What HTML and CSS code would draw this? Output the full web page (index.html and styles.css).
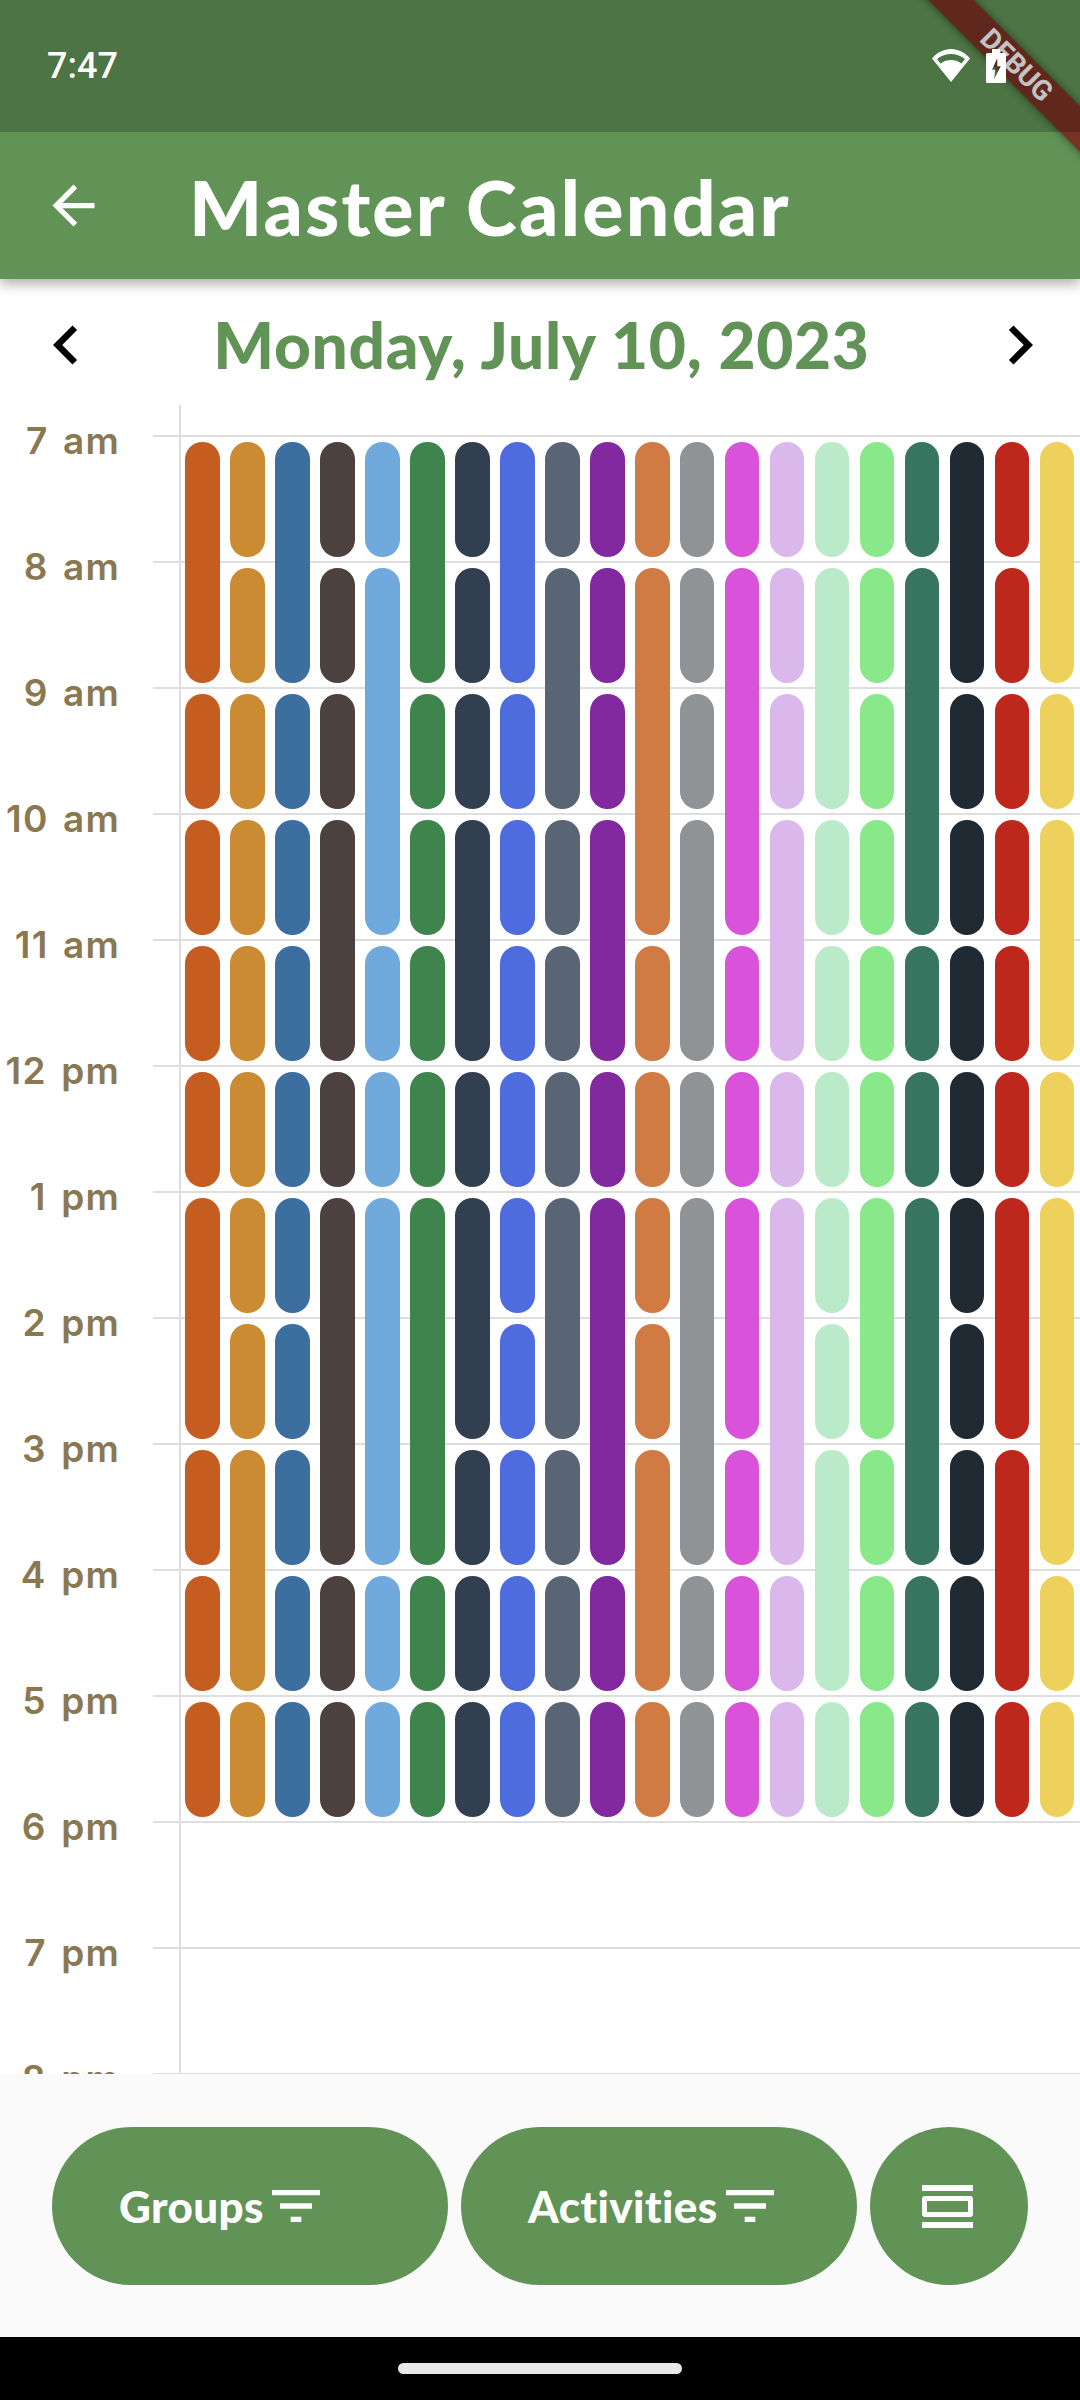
FILE: index.html
```html
<!DOCTYPE html>
<html lang="en">
<head>
<meta charset="utf-8">
<title>Master Calendar</title>
<link rel="stylesheet" href="styles.css">
</head>
<body>
<div class="screen">
  <header class="appbar">
    <svg class="back" viewBox="0 0 24 24"><path d="M20 11H7.83l5.59-5.59L12 4l-8 8 8 8 1.41-1.41L7.83 13H20v-2z"/></svg>
    <h1 class="title">Master Calendar</h1>
  </header>
  <div class="debug-clip"><div class="debug-band">DEBUG</div></div>
  <div class="statusbar">
    <span class="clock">7:47</span>
    <div class="status-icons">
      <svg class="wifi" viewBox="0 0 38 33"><path fill-rule="evenodd" d="M19 33L0 9.5C5 3.5 12 0 19 0s14 3.5 19 9.5zM5 10c4.500-3.500 9-5 14-5s9.500 1.500 14 5l-3.500 4.500C26 12 23 11 19 11s-7 1-10.500 3.500z"/></svg>
      <svg class="battery" viewBox="0 0 20 34"><path fill-rule="evenodd" d="M6 0h8v4h4.500A1.500 1.500 0 0 1 20 5.500v27a1.500 1.500 0 0 1-1.500 1.500h-17A1.500 1.500 0 0 1 0 32.500v-27A1.500 1.500 0 0 1 1.500 4H6zM11.300 9L6 20.700h3L8.300 30l6.400-12.700h-3.400z"/></svg>
    </div>
  </div>
  <div class="datebar">
    <svg class="chev" viewBox="0 0 24 24"><path d="M15.410 7.410L14 6l-6 6 6 6 1.410-1.410L10.830 12z"/></svg>
    <h2 class="date">Monday, July 10, 2023</h2>
    <svg class="chev" viewBox="0 0 24 24"><path d="M10 6L8.590 7.410 13.170 12l-4.580 4.590L10 18l6-6z"/></svg>
  </div>
  <main class="calendar">
    <div class="hour"><span class="label">7 am</span><span class="rule"></span></div>
    <div class="hour"><span class="label">8 am</span><span class="rule"></span></div>
    <div class="hour"><span class="label">9 am</span><span class="rule"></span></div>
    <div class="hour"><span class="label">10 am</span><span class="rule"></span></div>
    <div class="hour"><span class="label">11 am</span><span class="rule"></span></div>
    <div class="hour"><span class="label">12 pm</span><span class="rule"></span></div>
    <div class="hour"><span class="label">1 pm</span><span class="rule"></span></div>
    <div class="hour"><span class="label">2 pm</span><span class="rule"></span></div>
    <div class="hour"><span class="label">3 pm</span><span class="rule"></span></div>
    <div class="hour"><span class="label">4 pm</span><span class="rule"></span></div>
    <div class="hour"><span class="label">5 pm</span><span class="rule"></span></div>
    <div class="hour"><span class="label">6 pm</span><span class="rule"></span></div>
    <div class="hour"><span class="label">7 pm</span><span class="rule"></span></div>
    <div class="hour"><span class="label">8 pm</span><span class="rule"></span></div>
    <div class="events">
      <div class="col c1"><div class="p2"></div><div class="p1"></div><div class="p1"></div><div class="p1"></div><div class="p1"></div><div class="p2"></div><div class="p1"></div><div class="p1"></div><div class="p1"></div></div>
      <div class="col c2"><div class="p1"></div><div class="p1"></div><div class="p1"></div><div class="p1"></div><div class="p1"></div><div class="p1"></div><div class="p1"></div><div class="p1"></div><div class="p2"></div><div class="p1"></div></div>
      <div class="col c3"><div class="p2"></div><div class="p1"></div><div class="p1"></div><div class="p1"></div><div class="p1"></div><div class="p1"></div><div class="p1"></div><div class="p1"></div><div class="p1"></div><div class="p1"></div></div>
      <div class="col c4"><div class="p1"></div><div class="p1"></div><div class="p1"></div><div class="p2"></div><div class="p1"></div><div class="p3"></div><div class="p1"></div><div class="p1"></div></div>
      <div class="col c5"><div class="p1"></div><div class="p3"></div><div class="p1"></div><div class="p1"></div><div class="p3"></div><div class="p1"></div><div class="p1"></div></div>
      <div class="col c6"><div class="p2"></div><div class="p1"></div><div class="p1"></div><div class="p1"></div><div class="p1"></div><div class="p3"></div><div class="p1"></div><div class="p1"></div></div>
      <div class="col c7"><div class="p1"></div><div class="p1"></div><div class="p1"></div><div class="p2"></div><div class="p1"></div><div class="p2"></div><div class="p1"></div><div class="p1"></div><div class="p1"></div></div>
      <div class="col c8"><div class="p2"></div><div class="p1"></div><div class="p1"></div><div class="p1"></div><div class="p1"></div><div class="p1"></div><div class="p1"></div><div class="p1"></div><div class="p1"></div><div class="p1"></div></div>
      <div class="col c9"><div class="p1"></div><div class="p2"></div><div class="p1"></div><div class="p1"></div><div class="p1"></div><div class="p2"></div><div class="p1"></div><div class="p1"></div><div class="p1"></div></div>
      <div class="col c10"><div class="p1"></div><div class="p1"></div><div class="p1"></div><div class="p2"></div><div class="p1"></div><div class="p3"></div><div class="p1"></div><div class="p1"></div></div>
      <div class="col c11"><div class="p1"></div><div class="p3"></div><div class="p1"></div><div class="p1"></div><div class="p1"></div><div class="p1"></div><div class="p2"></div><div class="p1"></div></div>
      <div class="col c12"><div class="p1"></div><div class="p1"></div><div class="p1"></div><div class="p2"></div><div class="p1"></div><div class="p3"></div><div class="p1"></div><div class="p1"></div></div>
      <div class="col c13"><div class="p1"></div><div class="p3"></div><div class="p1"></div><div class="p1"></div><div class="p2"></div><div class="p1"></div><div class="p1"></div><div class="p1"></div></div>
      <div class="col c14"><div class="p1"></div><div class="p1"></div><div class="p1"></div><div class="p2"></div><div class="p1"></div><div class="p3"></div><div class="p1"></div><div class="p1"></div></div>
      <div class="col c15"><div class="p1"></div><div class="p2"></div><div class="p1"></div><div class="p1"></div><div class="p1"></div><div class="p1"></div><div class="p1"></div><div class="p2"></div><div class="p1"></div></div>
      <div class="col c16"><div class="p1"></div><div class="p1"></div><div class="p1"></div><div class="p1"></div><div class="p1"></div><div class="p1"></div><div class="p2"></div><div class="p1"></div><div class="p1"></div><div class="p1"></div></div>
      <div class="col c17"><div class="p1"></div><div class="p3"></div><div class="p1"></div><div class="p1"></div><div class="p3"></div><div class="p1"></div><div class="p1"></div></div>
      <div class="col c18"><div class="p2"></div><div class="p1"></div><div class="p1"></div><div class="p1"></div><div class="p1"></div><div class="p1"></div><div class="p1"></div><div class="p1"></div><div class="p1"></div><div class="p1"></div></div>
      <div class="col c19"><div class="p1"></div><div class="p1"></div><div class="p1"></div><div class="p1"></div><div class="p1"></div><div class="p1"></div><div class="p2"></div><div class="p2"></div><div class="p1"></div></div>
      <div class="col c20"><div class="p2"></div><div class="p1"></div><div class="p2"></div><div class="p1"></div><div class="p3"></div><div class="p1"></div><div class="p1"></div></div>
    </div>
  </main>
  <footer class="actions">
    <button class="pill-btn">Groups<svg class="filter" viewBox="0 0 24 24"><path d="M10 18h4v-2h-4v2zM3 6v2h18V6H3zm3 7h12v-2H6v2z"/></svg></button>
    <button class="pill-btn">Activities<svg class="filter" viewBox="0 0 24 24"><path d="M10 18h4v-2h-4v2zM3 6v2h18V6H3zm3 7h12v-2H6v2z"/></svg></button>
    <button class="round-btn"><svg class="view" viewBox="0 0 51 43"><path fill-rule="evenodd" d="M0 0h51v6H0zM0 37h51v6H0zM3 11h45a3 3 0 0 1 3 3v15a3 3 0 0 1-3 3H3a3 3 0 0 1-3-3V14a3 3 0 0 1 3-3zM5 16v11h41V16z"/></svg></button>
  </footer>
  <div class="navbar"><span class="home"></span></div>
</div>
</body>
</html>
```

FILE: styles.css
```css
* { box-sizing: border-box; }
html, body { margin: 0; padding: 0; background: #fff; }
.screen {
  position: relative;
  width: 1080px;
  height: 2400px;
  display: flex;
  flex-direction: column;
  overflow: hidden;
  background: #fff;
}
.appbar {
  position: relative;
  z-index: 2;
  flex: none;
  height: 279px;
  padding: 132px 0 0 42px;
  display: flex;
  align-items: center;
  background: #619256;
  box-shadow: 0 5px 12px rgba(0, 0, 0, .32);
}
.back { width: 63px; height: 63px; fill: #fff; flex: none; }
.title {
  margin: 0 0 0 84px;
  font: 900 77px "Lato", sans-serif;
  letter-spacing: 2.2px;
  color: #fff;
  white-space: nowrap;
}
.debug-clip {
  position: absolute;
  z-index: 3;
  top: 0;
  right: 0;
  width: 220px;
  height: 220px;
  overflow: hidden;
}
.debug-band {
  position: absolute;
  left: -62px;
  top: 31px;
  width: 400px;
  height: 32px;
  padding-left: 52px;
  transform: rotate(45deg);
  background: rgba(130, 10, 15, .7);
  box-shadow: 0 0 8px rgba(0, 0, 0, .5);
  color: #f4f4f4;
  font: 700 28px/32px "Roboto", sans-serif;
  text-align: center;
}
.statusbar {
  position: absolute;
  z-index: 4;
  top: 0;
  left: 0;
  width: 1080px;
  height: 132px;
  padding: 0 74px 0 47px;
  display: flex;
  align-items: center;
  justify-content: space-between;
  background: rgba(0, 0, 0, .2);
}
.clock { font: 500 36px "Roboto", sans-serif; color: #fff; }
.status-icons { display: flex; align-items: flex-start; gap: 16px; margin-top: -1px; }
.wifi { width: 38px; height: 33px; fill: #fff; }
.battery { width: 20px; height: 34px; fill: #fff; }
.datebar {
  flex: none;
  height: 126px;
  padding: 5px 21px 0 27px;
  display: flex;
  align-items: center;
  justify-content: space-between;
}
.chev { width: 78px; height: 78px; fill: #000; flex: none; }
.date {
  margin: 0 3px 0 0;
  font: 900 64px "Lato", sans-serif;
  letter-spacing: .7px;
  color: #619256;
  white-space: nowrap;
}
.calendar {
  position: relative;
  flex: 1;
  min-height: 0;
  overflow: hidden;
  padding-top: 30px;
}
.calendar::before {
  content: "";
  position: absolute;
  left: 179px;
  top: 0;
  bottom: 0;
  width: 2px;
  background: #dedede;
}
.hour {
  height: 126px;
  display: flex;
  align-items: flex-start;
}
.label {
  flex: none;
  width: 120px;
  margin-top: -14px;
  text-align: right;
  font: 600 37px/40px "Inter", sans-serif;
  letter-spacing: 1.2px;
  word-spacing: 4px;
  color: #8a7851;
  white-space: nowrap;
}
.rule {
  flex: 1;
  height: 2px;
  margin-left: 33px;
  background: #dedede;
}
.events {
  position: absolute;
  left: 185px;
  top: 37px;
  display: flex;
  gap: 10.33px;
}
.col { width: 34.67px; display: flex; flex-direction: column; gap: 11px; }
.col > div { border-radius: 17.34px; background: var(--pill); }
.p1 { height: 115px; }
.p2 { height: 241px; }
.p3 { height: 367px; }
.c1 { --pill: #c55c20; }
.c2 { --pill: #cb8b33; }
.c3 { --pill: #3c6f9f; }
.c4 { --pill: #4d4140; }
.c5 { --pill: #70a9dc; }
.c6 { --pill: #3e844c; }
.c7 { --pill: #323f51; }
.c8 { --pill: #4f6cdf; }
.c9 { --pill: #596574; }
.c10 { --pill: #8229a0; }
.c11 { --pill: #d07b43; }
.c12 { --pill: #8f9396; }
.c13 { --pill: #d952da; }
.c14 { --pill: #dab8ec; }
.c15 { --pill: #bbeaca; }
.c16 { --pill: #89e88a; }
.c17 { --pill: #387561; }
.c18 { --pill: #1f2a33; }
.c19 { --pill: #be271b; }
.c20 { --pill: #edd15c; }
.actions {
  position: relative;
  z-index: 1;
  flex: none;
  height: 263px;
  padding: 53px 0 0 52px;
  display: flex;
  align-items: flex-start;
  gap: 13px;
  background: #fafafa;
}
.pill-btn, .round-btn {
  height: 158px;
  border: 0;
  background: #619256;
  color: #fff;
  display: flex;
  align-items: center;
}
.pill-btn {
  width: 396px;
  padding: 0 0 0 67px;
  border-radius: 79px;
  font: 900 44px "Lato", sans-serif;
  letter-spacing: .4px;
}
.filter { width: 64px; height: 64px; fill: #fff; flex: none; }
.round-btn { width: 158px; border-radius: 50%; justify-content: center; padding: 0 3px 0 0; }
.view { width: 51px; height: 43px; fill: #fff; }
.navbar {
  flex: none;
  height: 63px;
  background: #000;
  display: flex;
  justify-content: center;
  padding-top: 26px;
}
.home { width: 284px; height: 11px; border-radius: 6px; background: #e8e8e8; }
```
